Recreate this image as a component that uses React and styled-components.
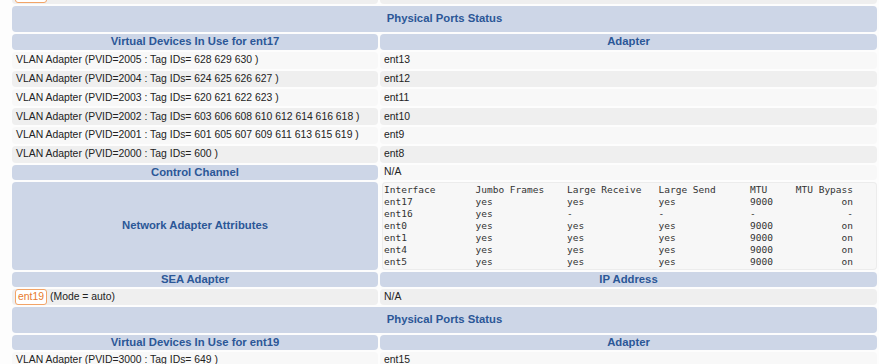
import React from 'react';
import styled, { createGlobalStyle } from 'styled-components';

const Global = createGlobalStyle`
  html, body {
    margin: 0;
    background: #fdfdfd;
    overflow: hidden;
  }
`;

const Table = styled.table`
  margin: -15px 0 0 10px;
  width: 869px;
  border-collapse: separate;
  border-spacing: 2px;
  table-layout: fixed;
  font-family: 'Liberation Sans', Arial, sans-serif;
  font-size: 10.4px;
  line-height: 12px;
  color: #222;
`;

const Head = styled.th`
  background: #cdd6e7;
  color: #2b5797;
  font-size: 11.3px;
  line-height: 13px;
  font-weight: bold;
  text-align: center;
  vertical-align: middle;
  border-radius: 4px;
  height: ${(props) => props.h || '15px'};
  padding: 0 4px;
`;

const Cell = styled.td`
  background: ${(props) => (props.alt ? '#efefef' : '#f8f8f8')};
  border-radius: 4px;
  height: ${(props) => props.h || '16.8px'};
  padding: 0 4px;
  vertical-align: middle;
  white-space: nowrap;
`;

const AttrCell = styled.td`
  background: #fbfbfb;
  border-radius: 4px;
  padding: 0 0 0 2px;
  vertical-align: top;
`;

const Attrs = styled.pre`
  margin: 0;
  padding: 2px 0 2px 2px;
  background: #f7f7f7;
  box-shadow: inset 0 0 0 1px #ececec;
  border-radius: 4px;
  font-family: 'DejaVu Sans Mono', 'Liberation Mono', monospace;
  font-size: 9.5px;
  line-height: 12px;
  color: #333;
`;

const Badge = styled.span`
  display: inline-block;
  padding: 1px 2px;
  margin: 0 3px 0 -1px;
  border: 1px solid #f2a468;
  border-radius: 3px;
  background: #fff;
  color: #e77a2c;
  line-height: 12px;
`;

const attrText = [
  'Interface       Jumbo Frames    Large Receive   Large Send      MTU     MTU Bypass',
  'ent17           yes             yes             yes             9000            on',
  'ent16           yes             -               -               -                -',
  'ent0            yes             yes             yes             9000            on',
  'ent1            yes             yes             yes             9000            on',
  'ent4            yes             yes             yes             9000            on',
  'ent5            yes             yes             yes             9000            on',
].join('\n');

const vlans17 = [
  ['VLAN Adapter (PVID=2005 : Tag IDs= 628 629 630 )', 'ent13'],
  ['VLAN Adapter (PVID=2004 : Tag IDs= 624 625 626 627 )', 'ent12'],
  ['VLAN Adapter (PVID=2003 : Tag IDs= 620 621 622 623 )', 'ent11'],
  ['VLAN Adapter (PVID=2002 : Tag IDs= 603 606 608 610 612 614 616 618 )', 'ent10'],
  ['VLAN Adapter (PVID=2001 : Tag IDs= 601 605 607 609 611 613 615 619 )', 'ent9'],
  ['VLAN Adapter (PVID=2000 : Tag IDs= 600 )', 'ent8'],
];

export default function App() {
  return (
    <>
      <Global />
      <Table>
        <colgroup>
          <col style={{ width: '366px' }} />
          <col />
        </colgroup>
        <tbody>
          <tr>
            <Cell alt>
              <Badge>ent18</Badge>(Mode = auto)
            </Cell>
            <Cell alt>N/A</Cell>
          </tr>
          <tr>
            <Head colSpan={2} h="26px">
              Physical Ports Status
            </Head>
          </tr>
          <tr>
            <Head h="16px">Virtual Devices In Use for ent17</Head>
            <Head h="16px">Adapter</Head>
          </tr>
          {vlans17.map(([name, adapter], i) => (
            <tr key={adapter}>
              <Cell alt={i % 2 === 1}>{name}</Cell>
              <Cell alt={i % 2 === 1}>{adapter}</Cell>
            </tr>
          ))}
          <tr>
            <Head>Control Channel</Head>
            <Cell h="15px">N/A</Cell>
          </tr>
          <tr>
            <Head>Network Adapter Attributes</Head>
            <AttrCell>
              <Attrs>{attrText}</Attrs>
            </AttrCell>
          </tr>
          <tr>
            <Head>SEA Adapter</Head>
            <Head>IP Address</Head>
          </tr>
          <tr>
            <Cell alt h="16px">
              <Badge>ent19</Badge>(Mode = auto)
            </Cell>
            <Cell alt h="16px">N/A</Cell>
          </tr>
          <tr>
            <Head colSpan={2} h="26px">
              Physical Ports Status
            </Head>
          </tr>
          <tr>
            <Head>Virtual Devices In Use for ent19</Head>
            <Head>Adapter</Head>
          </tr>
          <tr>
            <Cell>VLAN Adapter (PVID=3000 : Tag IDs= 649 )</Cell>
            <Cell>ent15</Cell>
          </tr>
        </tbody>
      </Table>
    </>
  );
}
